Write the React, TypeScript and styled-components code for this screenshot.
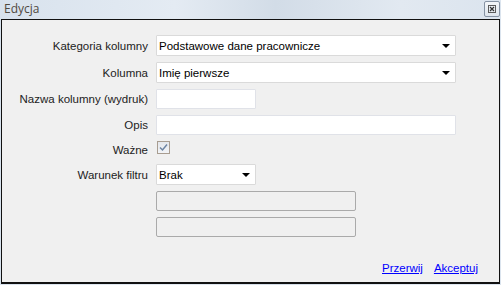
import { createGlobalStyle, styled } from 'styled-components';

const Global = createGlobalStyle`
    html, body {
        margin: 0;
        padding: 0;
        background: #dce4ee;
    }
    * {
        box-sizing: border-box;
    }
`;

const S = {
    Window: styled.div`
        width: 501px;
        height: 285px;
        display: flex;
        flex-direction: column;
        background: linear-gradient(
            to right,
            #d8e2ed 0%,
            #e4ebf3 35%,
            #d2dce7 55%,
            #e2e9f1 80%,
            #dbe4ee 100%
        );
        padding: 0 1px 1px 1px;
    `,
    TitleBar: styled.div`
        height: 19px;
        display: flex;
        align-items: flex-start;
        justify-content: space-between;
        padding-left: 3px;
    `,
    Title: styled.span`
        font-family: 'Open Sans', 'Noto Sans', sans-serif;
        font-size: 12px;
        line-height: 17px;
        color: #50493f;
    `,
    CloseButton: styled.button`
        width: 16px;
        height: 16px;
        margin-top: 1px;
        padding: 0;
        border: 1px solid #8693a4;
        border-radius: 2px;
        background: linear-gradient(#f3f6f9, #dfe6ee);
        display: grid;
        place-items: center;
    `,
    Client: styled.div`
        flex: 1;
        display: flex;
        flex-direction: column;
        background: #f0f0f0;
        border: 1px solid #111;
        border-bottom-width: 2px;
        font-family: 'Liberation Sans', Arial, sans-serif;
        font-size: 11.5px;
    `,
    Form: styled.div`
        display: grid;
        grid-template-columns: 145px auto;
        grid-template-rows: 21px 21px 20px 20px 17px 21px 20px 20px;
        column-gap: 8px;
        row-gap: 6px;
        margin-top: 15px;
        margin-left: 1px;
    `,
    Label: styled.label`
        color: #222;
        text-align: right;
        align-self: center;
        white-space: nowrap;
    `,
    Combo: styled.div<{ $w: number }>`
        width: ${(p) => p.$w}px;
        height: 21px;
        background: #fff;
        border: 1px solid #dadada;
        border-radius: 1px;
        display: flex;
        align-items: center;
        justify-content: space-between;
        padding: 0 5px 0 2px;
        color: #000;
    `,
    Arrow: styled.span`
        width: 0;
        height: 0;
        border-left: 4px solid transparent;
        border-right: 4px solid transparent;
        border-top: 4px solid #000;
    `,
    TextBox: styled.div<{ $w: number; $disabled?: boolean }>`
        width: ${(p) => p.$w}px;
        height: 20px;
        background: ${(p) => (p.$disabled ? '#f0f0f0' : '#fff')};
        border: 1px solid ${(p) => (p.$disabled ? '#aaaaaa' : '#e0e2e8')};
        border-radius: ${(p) => (p.$disabled ? '2px' : '1px')};
    `,
    Check: styled.span`
        width: 13px;
        height: 13px;
        align-self: start;
        margin-left: 1px;
        border: 1px solid #a89d91;
        background: linear-gradient(#e4e7ec, #f2f4f7);
        display: grid;
        place-items: center;
    `,
    Empty: styled.span``,
    Footer: styled.div`
        margin-top: auto;
        display: flex;
        justify-content: flex-end;
        gap: 11px;
        padding: 0 21px 8px 0;
    `,
    Link: styled.a`
        color: #0000ff;
        text-decoration: underline;
        cursor: pointer;
    `,
};

function CloseIcon() {
    return (
        <svg width="10" height="10" viewBox="0 0 10 10">
            <rect x="1.5" y="1.5" width="7" height="7" fill="none" stroke="#5a5a5a" />
            <path d="M3 3 L7 7 M7 3 L3 7" stroke="#333" strokeWidth="1.2" />
        </svg>
    );
}

function CheckMark() {
    return (
        <svg width="9" height="9" viewBox="0 0 9 9">
            <path d="M1 4.5 L3.5 7 L8 1.5" fill="none" stroke="#6d84a3" strokeWidth="1.5" />
        </svg>
    );
}

export default function App() {
    return (
        <S.Window>
            <Global />
            <S.TitleBar>
                <S.Title>Edycja</S.Title>
                <S.CloseButton type="button">
                    <CloseIcon />
                </S.CloseButton>
            </S.TitleBar>
            <S.Client>
                <S.Form>
                    <S.Label>Kategoria kolumny</S.Label>
                    <S.Combo $w={300}>
                        Podstawowe dane pracownicze
                        <S.Arrow />
                    </S.Combo>

                    <S.Label>Kolumna</S.Label>
                    <S.Combo $w={300}>
                        Imię pierwsze
                        <S.Arrow />
                    </S.Combo>

                    <S.Label>Nazwa kolumny (wydruk)</S.Label>
                    <S.TextBox $w={100} />

                    <S.Label>Opis</S.Label>
                    <S.TextBox $w={300} />

                    <S.Label>Ważne</S.Label>
                    <S.Check>
                        <CheckMark />
                    </S.Check>

                    <S.Label>Warunek filtru</S.Label>
                    <S.Combo $w={100}>
                        Brak
                        <S.Arrow />
                    </S.Combo>

                    <S.Empty />
                    <S.TextBox $w={200} $disabled />

                    <S.Empty />
                    <S.TextBox $w={200} $disabled />
                </S.Form>
                <S.Footer>
                    <S.Link>Przerwij</S.Link>
                    <S.Link>Akceptuj</S.Link>
                </S.Footer>
            </S.Client>
        </S.Window>
    );
}
